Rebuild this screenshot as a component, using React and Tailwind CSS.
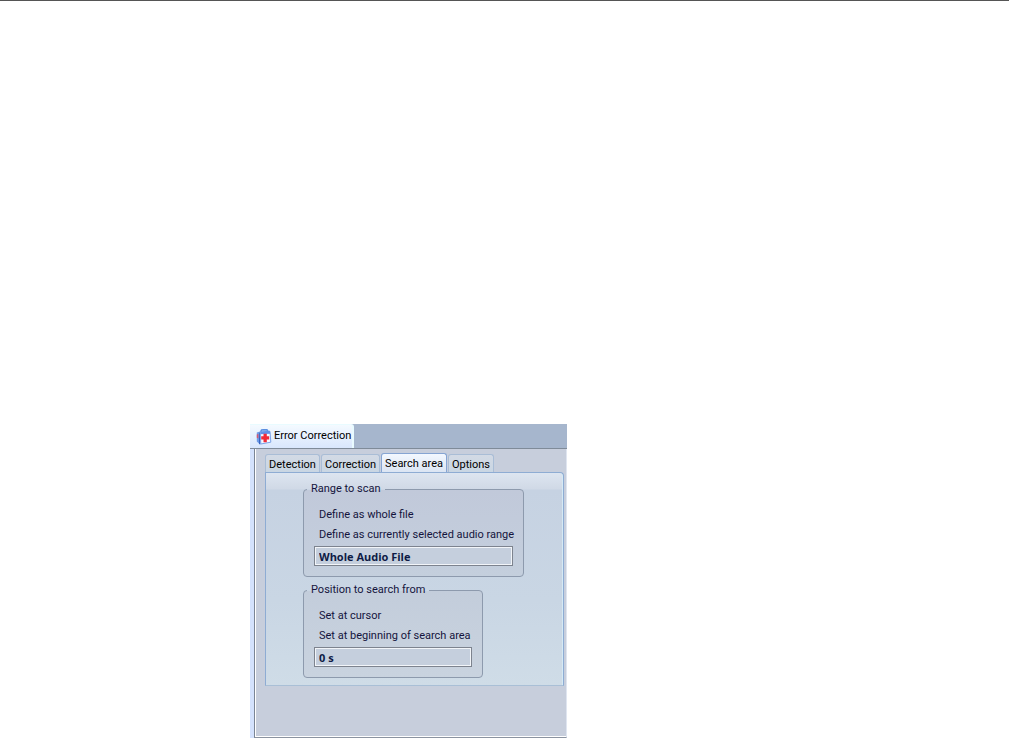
import { useState } from "react";
import clsx from "clsx";

const TABS = [
    { name: "Detection", width: "w-[55px]" },
    { name: "Correction", width: "w-[59px]" },
    { name: "Search area", width: "w-[66px]" },
    { name: "Options", width: "w-[46px]" },
];

const FirstAidIcon = () => (
    <svg
        width="16"
        height="16"
        viewBox="0 0 16 16"
        className="shrink-0"
        aria-hidden="true"
    >
        <path d="M4.6 2.8 5.6 0.9 10.8 0.6 12 2.4" fill="none" stroke="#5b8fe0" strokeWidth="1.6" />
        <path d="M0.8 3.6 4 2.4V15.4L0.8 12.6Z" fill="#6f9be6" />
        <path d="M0.8 5.5 2.4 5V9.4L0.8 8.8Z" fill="#d8566f" />
        <path d="M3.2 4V15L4.4 15.4V3Z" fill="#2856b8" />
        <path d="M4.2 3.2 14 2.4 14.8 13.2 4.8 15Z" fill="#f4f8ff" stroke="#7aa2e8" />
        <path d="M4.4 2.4 13.8 1.8 14.2 4.8 4.4 5.2Z" fill="#5f91e6" />
        <path d="M7.5 4.8H10.8V7.2H13.2V10.6H10.8V13.2H7.5V10.6H5.2V7.2H7.5Z" fill="#f02a38" />
    </svg>
);

const Group = ({ title, actions, value, className }) => (
    <fieldset className={clsx("min-w-0 rounded-[4px] border border-[#8d9aad] px-[10px] pt-2 pb-[10px]", className)}>
        <legend className="-ml-[7px] px-1 leading-4 whitespace-nowrap">{title}</legend>
        {actions.map((action) => (
            <button
                key={action}
                type="button"
                className="block h-5 w-full pl-[5px] text-left whitespace-nowrap"
            >
                {action}
            </button>
        ))}
        <input
            type="text"
            readOnly
            value={value}
            aria-label={title}
            className="mt-px block h-5 w-full border border-[#7d838e] bg-[#c5cfdd] pl-1 font-['Open_Sans',sans-serif] font-bold text-[#0e1b45] shadow-[inset_0_0_0_1px_#f2f5f9] outline-none"
        />
    </fieldset>
);

const App = () => {
    const [active, setActive] = useState("Search area");

    return (
        <div className="flex min-h-screen flex-col border-t border-[#555555] bg-white pt-[423px] pl-[250px] font-['Roboto','Noto_Sans',sans-serif] text-[11px] text-[#14143c]">
            <main className="flex w-full max-w-[317px] grow flex-col bg-[#d4e2fd]">
                {/* Window tab */}
                <header className="flex h-[25px] border-b border-[#7f8b99] bg-[#a6b6cd]">
                    <h1 className="flex w-[104px] items-center gap-[2px] rounded-tr-[3px] border-t border-r-2 border-[#e9fbff] bg-linear-to-b from-[#f4faff] to-[#d9e7fd] pl-[6px] whitespace-nowrap text-black">
                        <FirstAidIcon />
                        Error Correction
                    </h1>
                </header>

                <div className="ml-1 flex grow flex-col border-r border-b border-l border-r-[#dfe5f0] border-b-[#8b93a0] border-l-[#7b8594] bg-[#c7cedc]">
                    <div className="grow border-b border-l border-white pt-1 pr-[2px] pb-[50px] pl-[9px]">
                        <div
                            role="tablist"
                            className="flex h-[19px] items-end gap-px"
                        >
                            {TABS.map((tab) => (
                                <button
                                    key={tab.name}
                                    type="button"
                                    role="tab"
                                    aria-selected={active === tab.name}
                                    onClick={() => setActive(tab.name)}
                                    className={clsx(
                                        "rounded-t-[3px] border border-b-0 pt-[2px] text-center whitespace-nowrap text-black",
                                        tab.width,
                                        active === tab.name
                                            ? "h-[19px] border-[#86a5d3] bg-linear-to-b from-[#f3f8ff] to-[#dbe5f3]"
                                            : "h-[18px] border-[#a9bdd6] bg-linear-to-b from-[#d3dae5] to-[#c9d6e3]"
                                    )}
                                >
                                    {tab.name}
                                </button>
                            ))}
                        </div>

                        <section
                            role="tabpanel"
                            aria-label={active}
                            className="rounded-tr-[4px] border border-[#8eacd3] border-b-[#a9bfd6] bg-[linear-gradient(to_bottom,#dde5f0_0px,#d0d9e6_16px,#c6d2e2_17px,#c9d6e4_60%,#cfdce7_100%)] pt-2 pr-[39px] pb-[7px] pl-[37px] shadow-[inset_-1px_0_0_#d5eaf5]"
                        >
                            <Group
                                title="Range to scan"
                                actions={["Define as whole file", "Define as currently selected audio range"]}
                                value="Whole Audio File"
                                className="bg-linear-to-b from-[#c1c9da] to-[#c4cfdd]"
                            />
                            <Group
                                title="Position to search from"
                                actions={["Set at cursor", "Set at beginning of search area"]}
                                value="0 s"
                                className="mt-[5px] max-w-[180px] bg-linear-to-b from-[#c3cddb] to-[#c9d3df]"
                            />
                        </section>
                    </div>
                </div>
            </main>
        </div>
    );
};

export default App;
